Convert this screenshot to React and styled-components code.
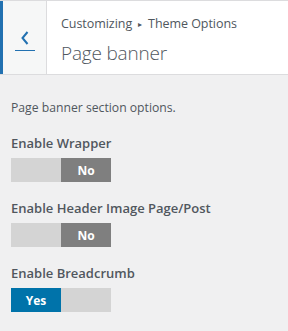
import React from 'react';
import styled, { createGlobalStyle } from 'styled-components';

const GlobalStyle = createGlobalStyle`
	body
	{
	  margin: 0;
	  background: #f0f0f1;
	  font-family: "Open Sans", "Noto Sans", sans-serif;
	  color: #50575e;
	}
`;

const Header = styled.div`
	display: flex;
	height: 73px;
	background: #fff;
	border-top: 1px solid #dcdcde;
	border-bottom: 1px solid #dcdcde;
`;

const BackButton = styled.button`
	box-sizing: border-box;
	width: 47px;
	height: 100%;
	padding: 0;
	margin: 0;
	display: flex;
	flex-direction: column;
	align-items: center;
	justify-content: flex-start;
	background: #f6f7f7;
	border: none;
	border-left: 3px solid #2271b1;
	border-right: 1px solid #dcdcde;
	cursor: pointer;

	svg
	{
	  margin-top: 30px;
	  margin-left: 1px;
	}
`;

const Underline = styled.span`
	display: block;
	width: 20px;
	height: 1px;
	margin-top: 5px;
	background: #2271b1;
`;

const Titles = styled.div`
	padding: 14px 0 0 14px;
`;

const Crumb = styled.div`
	font-size: 12.5px;
	line-height: 18px;
	color: #50575e;
	letter-spacing: -0.05px;

	span
	{
	  font-size: 8px;
	  margin: 0 6px;
	  vertical-align: 1px;
	}
`;

const Title = styled.div`
	font-size: 19px;
	font-weight: 300;
	line-height: 28px;
	margin-top: 6px;
	letter-spacing: -0.2px;
	color: #50575e;
`;

const Section = styled.div`
	padding: 24px 11px 0;
`;

const Description = styled.p`
	margin: 0 0 16px;
	font-size: 12.2px;
	line-height: 18px;
	color: #50575e;
`;

const Field = styled.div`
	margin-bottom: 16px;
`;

const Label = styled.div`
	font-size: 13px;
	font-weight: 600;
	line-height: 20px;
	margin-bottom: 5px;
	color: #50575e;
`;

const Toggle = styled.div`
	display: flex;
	width: 100px;
	height: 24px;
`;

const Half = styled.div`
	flex: 1;
	display: flex;
	align-items: center;
	justify-content: center;
	font-size: 12px;
	font-weight: 700;
	color: #fff;
	background: ${props => props.$on ? props.$color : '#d4d4d4'};
`;

const fields = [
	{ label: 'Enable Wrapper', value: false },
	{ label: 'Enable Header Image Page/Post', value: false },
	{ label: 'Enable Breadcrumb', value: true },
];

function Switch({ value })
{
	return (
		<Toggle>
			<Half $on={value} $color="#0073aa">{value ? 'Yes' : ''}</Half>
			<Half $on={!value} $color="#7f7f7f">{value ? '' : 'No'}</Half>
		</Toggle>
	);
}

export default function App()
{
	return (
		<>
			<GlobalStyle />
			<Header>
				<BackButton aria-label="Back">
					<svg width="8" height="14" viewBox="0 0 8 14">
						<path d="M6.5 1 L1.5 7 L6.5 13" fill="none" stroke="#2271b1" strokeWidth="2" />
					</svg>
					<Underline />
				</BackButton>
				<Titles>
					<Crumb>Customizing<span>▸</span>Theme Options</Crumb>
					<Title>Page banner</Title>
				</Titles>
			</Header>
			<Section>
				<Description>Page banner section options.</Description>
				{fields.map(f => (
					<Field key={f.label}>
						<Label>{f.label}</Label>
						<Switch value={f.value} />
					</Field>
				))}
			</Section>
		</>
	);
}
